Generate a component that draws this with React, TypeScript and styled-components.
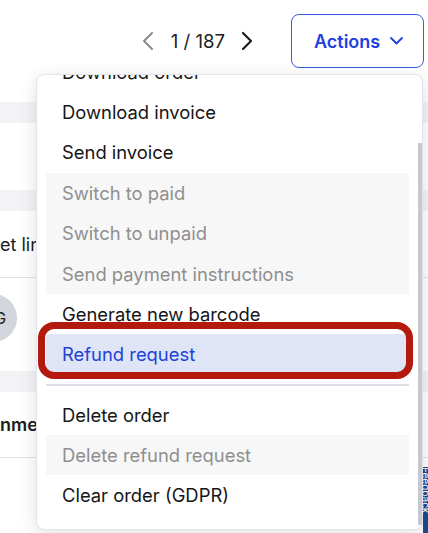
import React, { useLayoutEffect, useRef } from 'react';
import styled, { createGlobalStyle, css } from 'styled-components';

const GlobalStyle = createGlobalStyle`
  html, body { margin: 0; padding: 0; background: #ffffff; }
  body {
    font-family: Inter, "Noto Sans", "Liberation Sans", sans-serif;
    -webkit-font-smoothing: antialiased;
  }
`;

const Page = styled.div`
  position: relative;
  width: 428px;
  height: 533px;
  overflow: hidden;
  background: #ffffff;
  color: #1c1c1c;
`;

const Header = styled.header`
  display: flex;
  justify-content: flex-end;
  align-items: flex-start;
  box-sizing: border-box;
  height: 102px;
  padding: 14px 4px 0 0;
`;

const Pager = styled.div`
  display: flex;
  align-items: center;
  height: 54px;
  margin-right: 36px;
`;

const PagerArrow = styled.button<{ $muted?: boolean }>`
  display: flex;
  align-items: center;
  justify-content: center;
  width: 16px;
  height: 24px;
  padding: 0;
  border: 0;
  background: none;
  color: ${(p) => (p.$muted ? '#8a8a8a' : '#1c1c1c')};
`;

const PagerText = styled.span`
  font-size: 18.6px;
  color: #222;
  margin: 0 14px 0 15px;
`;

const ActionsButton = styled.button`
  display: flex;
  align-items: center;
  gap: 10px;
  box-sizing: border-box;
  width: 133px;
  height: 54px;
  padding: 0 0 0 22px;
  border: 1px solid #3a5be8;
  border-radius: 8px;
  background: #ffffff;
  color: #1e3fe0;
  font-family: inherit;
  font-size: 18px;
  font-weight: 600;
`;

const Band = styled.div`
  height: 21px;
  background: #f3f3f5;
`;

const Blank = styled.div<{ $h: number }>`
  height: ${(p) => p.$h}px;
`;

const Row = styled.div<{ $h: number; $bold?: boolean }>`
  display: flex;
  align-items: center;
  box-sizing: border-box;
  height: ${(p) => p.$h}px;
  border-bottom: 1px solid #e2e2e7;
  font-size: 18px;
  font-weight: ${(p) => (p.$bold ? 600 : 400)};
  white-space: nowrap;
  overflow: hidden;
`;

const AvatarRow = styled.div`
  display: flex;
  align-items: flex-start;
  box-sizing: border-box;
  height: 93px;
  padding-top: 16px;
`;

const Avatar = styled.div`
  display: flex;
  align-items: center;
  justify-content: center;
  flex: none;
  width: 48px;
  height: 48px;
  margin-left: -31px;
  border-radius: 50%;
  background: #d3d5dc;
  color: #222;
  font-size: 16px;
`;

const FeedbackTab = styled.div`
  position: absolute;
  right: 0;
  top: 467px;
  width: 5px;
  height: 90px;
  overflow: hidden;
  background: #1f4b8c;
  color: #fff;
  font-size: 10px;
  line-height: 5px;
  writing-mode: vertical-rl;
`;

const Menu = styled.div`
  position: absolute;
  left: 36px;
  top: 74px;
  width: 387px;
  height: 456px;
  box-sizing: border-box;
  background: #ffffff;
  border: 1px solid #e3e4e9;
  border-radius: 8px;
  box-shadow: 0 4px 18px rgba(20, 20, 40, 0.12);
  overflow: hidden;
  z-index: 5;
`;

const MenuScroll = styled.div`
  height: 100%;
  overflow-y: scroll;
  box-sizing: border-box;
  scrollbar-width: none;
  &::-webkit-scrollbar { display: none; }
`;

const ScrollThumb = styled.div`
  position: absolute;
  right: 0;
  top: 68px;
  width: 4px;
  height: 382px;
  background: #c6c8d0;
`;

const MenuList = styled.ul`
  list-style: none;
  margin: 0;
  padding: 8px 13px 13px 9px;
`;

const Item = styled.li<{ $disabled?: boolean; $active?: boolean }>`
  display: flex;
  align-items: center;
  height: 40.4px;
  padding-left: 16px;
  font-size: 18.4px;
  color: #161616;
  white-space: nowrap;
  ${(p) =>
    p.$disabled &&
    css`
      background: #f7f7f8;
      color: #8f8f8f;
    `}
  ${(p) =>
    p.$active &&
    css`
      background: #dfe4f6;
      color: #2143d6;
      border-radius: 4px;
    `}
`;

const Separator = styled.li`
  height: 2px;
  margin: 9px 0;
  background: #dedfe6;
`;

const Highlight = styled.div`
  position: absolute;
  left: 38px;
  top: 322px;
  width: 375px;
  height: 57px;
  box-sizing: border-box;
  border: 7px solid #b3190c;
  border-radius: 16px;
  z-index: 6;
  pointer-events: none;
`;

const ChevronLeft = () => (
  <svg width="14" height="20" viewBox="0 0 14 20" fill="none">
    <path d="M11 2 L3 10 L11 18" stroke="currentColor" strokeWidth="2" strokeLinecap="round" strokeLinejoin="round" />
  </svg>
);

const ChevronRight = () => (
  <svg width="14" height="20" viewBox="0 0 14 20" fill="none">
    <path d="M3 2 L11 10 L3 18" stroke="currentColor" strokeWidth="2.2" strokeLinecap="round" strokeLinejoin="round" />
  </svg>
);

const ChevronDown = () => (
  <svg width="13" height="8" viewBox="0 0 13 8" fill="none">
    <path d="M1 1 L6.5 6.5 L12 1" stroke="currentColor" strokeWidth="1.8" strokeLinecap="round" strokeLinejoin="round" />
  </svg>
);

type MenuEntry = { label: string; disabled?: boolean; active?: boolean } | 'sep';

const entries: MenuEntry[] = [
  { label: 'Edit order' },
  { label: 'Download order' },
  { label: 'Download invoice' },
  { label: 'Send invoice' },
  { label: 'Switch to paid', disabled: true },
  { label: 'Switch to unpaid', disabled: true },
  { label: 'Send payment instructions', disabled: true },
  { label: 'Generate new barcode' },
  { label: 'Refund request', active: true },
  'sep',
  { label: 'Delete order' },
  { label: 'Delete refund request', disabled: true },
  { label: 'Clear order (GDPR)' },
];

export default function App() {
  const scrollRef = useRef<HTMLDivElement>(null);

  useLayoutEffect(() => {
    const el = scrollRef.current;
    if (el) el.scrollTop = el.scrollHeight;
  }, []);

  return (
    <Page>
      <GlobalStyle />
      <Header>
        <Pager>
          <PagerArrow $muted aria-label="Previous">
            <ChevronLeft />
          </PagerArrow>
          <PagerText>1 / 187</PagerText>
          <PagerArrow aria-label="Next">
            <ChevronRight />
          </PagerArrow>
        </Pager>
        <ActionsButton>
          Actions
          <ChevronDown />
        </ActionsButton>
      </Header>
      <Band />
      <Blank $h={67} />
      <Band />
      <Row $h={67}>et link</Row>
      <AvatarRow>
        <Avatar>MG</Avatar>
      </AvatarRow>
      <Band />
      <Row $h={66} $bold>nment</Row>

      <FeedbackTab>Feedback</FeedbackTab>

      <Menu>
        <MenuScroll ref={scrollRef}>
          <MenuList>
            {entries.map((e, i) =>
              e === 'sep' ? (
                <Separator key={i} />
              ) : (
                <Item key={i} $disabled={e.disabled} $active={e.active}>
                  {e.label}
                </Item>
              )
            )}
          </MenuList>
        </MenuScroll>
        <ScrollThumb />
      </Menu>
      <Highlight />
    </Page>
  );
}
